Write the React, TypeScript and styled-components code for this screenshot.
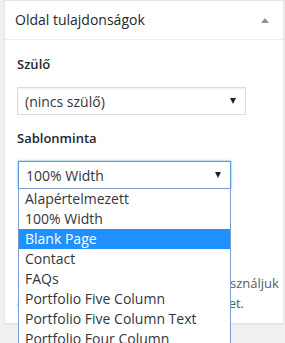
import styled, { createGlobalStyle } from "styled-components";

const GlobalStyle = createGlobalStyle`
  html, body {
    margin: 0;
    padding: 0;
    background: #f1f1f1;
    font-family: "Open Sans", "Liberation Sans", sans-serif;
    color: #23282d;
  }
`;

const TEMPLATES = [
  "Alapértelmezett",
  "100% Width",
  "Blank Page",
  "Contact",
  "FAQs",
  "Portfolio Five Column",
  "Portfolio Five Column Text",
  "Portfolio Four Column",
];

const SELECTED = 2;

const App = () => {
  return (
    <>
      <GlobalStyle />
      <Page>
        <Panel>
          <Header>
            <Title>Oldal tulajdonságok</Title>
            <Toggle />
          </Header>
          <Body>
            <Label>Szülő</Label>
            <Select $width={229}>
              <SelectText>(nincs szülő)</SelectText>
              <Caret />
            </Select>
            <Label>Sablonminta</Label>
            <SelectWrap>
              <Select $width={213} $focused>
                <SelectText>100% Width</SelectText>
                <Caret />
              </Select>
              <Options>
                {TEMPLATES.map((t, i) => (
                  <Option key={t} $active={i === SELECTED}>
                    {t}
                  </Option>
                ))}
              </Options>
            </SelectWrap>
            <Help>
              <HelpLine $width={252}>Egyes oldalakhoz egyedi sablont használjuk</HelpLine>
              <HelpLine $width={227}>ezekkel más megjelenés is elérhet.</HelpLine>
            </Help>
          </Body>
        </Panel>
      </Page>
    </>
  );
};

const Page = styled.div`
  padding: 0 1px 0 4px;
  height: 343px;
  overflow: hidden;
`;

const Panel = styled.div`
  width: 280px;
  box-sizing: border-box;
  background: #fff;
  border: 1px solid #e5e5e5;
  box-shadow: 0 1px 1px rgba(0, 0, 0, 0.04);
`;

const Header = styled.div`
  height: 38px;
  display: flex;
  align-items: center;
  justify-content: space-between;
  padding: 0 14px 0 10px;
  border-bottom: 1px solid #eee;
`;

const Title = styled.div`
  font-size: 14px;
  line-height: 20px;
  color: #23282d;
`;

const Toggle = styled.span`
  width: 0;
  height: 0;
  border-left: 4px solid transparent;
  border-right: 4px solid transparent;
  border-bottom: 5px solid #8c9299;
  margin-top: 1px;
`;

const Body = styled.div`
  padding: 15px 12px 10px 12px;
`;

const Label = styled.div`
  font-size: 13px;
  font-weight: 600;
  line-height: 18px;
  color: #23282d;
  margin-bottom: 14px;
`;

const Select = styled.div<{ $width: number; $focused?: boolean }>`
  width: ${(p) => p.$width}px;
  height: 28px;
  box-sizing: border-box;
  display: flex;
  align-items: center;
  justify-content: space-between;
  padding: 0 9px 0 7px;
  border: 1px solid ${(p) => (p.$focused ? "#5b9dd9" : "#ddd")};
  box-shadow: ${(p) =>
    p.$focused ? "0 0 2px rgba(30, 140, 190, 0.8)" : "inset 0 1px 2px rgba(0, 0, 0, 0.07)"};
  background: #fff;
  margin-bottom: 14px;
`;

const SelectText = styled.span`
  font-size: 14px;
  color: #32373c;
`;

const Caret = styled.span`
  width: 0;
  height: 0;
  border-left: 3.5px solid transparent;
  border-right: 3.5px solid transparent;
  border-top: 6px solid #222;
`;

const SelectWrap = styled.div`
  position: relative;
  margin-left: 1px;
`;

const Options = styled.div`
  position: absolute;
  left: 0;
  top: 27px;
  width: 213px;
  box-sizing: border-box;
  background: #fff;
  border: 1px solid #7f9bd0;
  border-bottom: none;
  z-index: 2;
`;

const Option = styled.div<{ $active: boolean }>`
  height: 20px;
  line-height: 20px;
  padding-left: 6px;
  font-size: 14px;
  white-space: nowrap;
  color: ${(p) => (p.$active ? "#fff" : "#32373c")};
  background: ${(p) => (p.$active ? "#1e90ff" : "#fff")};
`;

const Help = styled.div`
  margin-top: 84px;
  font-size: 13px;
  line-height: 20px;
  color: #555d66;
`;

const HelpLine = styled.div<{ $width: number }>`
  width: ${(p) => p.$width}px;
  white-space: nowrap;
  text-align: justify;
  text-align-last: justify;
`;

export default App;
